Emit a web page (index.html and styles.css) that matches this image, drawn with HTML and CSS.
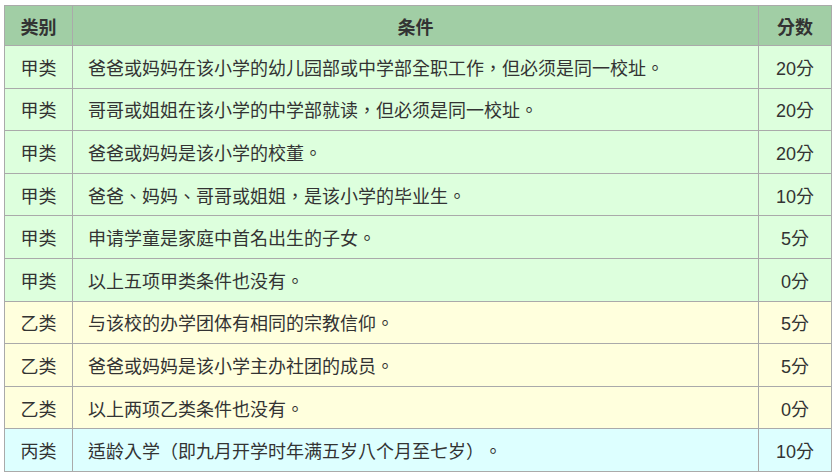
FILE: index.html
```html
<!DOCTYPE html>
<html lang="zh-Hant">
<head>
<meta charset="utf-8">
<link rel="stylesheet" href="styles.css">
</head>
<body>
<table class="score">
<colgroup><col class="c1"><col class="c2"><col class="c3"></colgroup>
<thead>
<tr><th>类别</th><th>条件</th><th>分数</th></tr>
</thead>
<tbody>
<tr class="jia"><td class="cat">甲类</td><td class="cond">爸爸或妈妈在该小学的幼儿园部或中学部全职工作，但必须是同一校址。</td><td class="pts">20分</td></tr>
<tr class="jia"><td class="cat">甲类</td><td class="cond">哥哥或姐姐在该小学的中学部就读，但必须是同一校址。</td><td class="pts">20分</td></tr>
<tr class="jia"><td class="cat">甲类</td><td class="cond">爸爸或妈妈是该小学的校董。</td><td class="pts">20分</td></tr>
<tr class="jia"><td class="cat">甲类</td><td class="cond">爸爸、妈妈、哥哥或姐姐，是该小学的毕业生。</td><td class="pts">10分</td></tr>
<tr class="jia"><td class="cat">甲类</td><td class="cond">申请学童是家庭中首名出生的子女。</td><td class="pts">5分</td></tr>
<tr class="jia"><td class="cat">甲类</td><td class="cond">以上五项甲类条件也没有。</td><td class="pts">0分</td></tr>
<tr class="yi"><td class="cat">乙类</td><td class="cond">与该校的办学团体有相同的宗教信仰。</td><td class="pts">5分</td></tr>
<tr class="yi"><td class="cat">乙类</td><td class="cond">爸爸或妈妈是该小学主办社团的成员。</td><td class="pts">5分</td></tr>
<tr class="yi"><td class="cat">乙类</td><td class="cond">以上两项乙类条件也没有。</td><td class="pts">0分</td></tr>
<tr class="bing"><td class="cat">丙类</td><td class="cond">适龄入学（即九月开学时年满五岁八个月至七岁）。</td><td class="pts">10分</td></tr>
</tbody>
</table>
</body>
</html>
```
FILE: styles.css
```css
html, body {
  margin: 0;
  background: #ffffff;
}
body {
  padding: 5px 0 0 4px;
  font-family: "Liberation Sans", "Noto Sans CJK TC", sans-serif;
  font-size: 18px;
  color: #333333;
  text-spacing-trim: space-all;
}
.score {
  border-collapse: collapse;
  width: 828px;
  table-layout: fixed;
}
.c1 { width: 68px; }
.c3 { width: 73px; }
.score th, .score td {
  border: 1px solid #aaaaaa;
  padding: 0;
}
.score th {
  background: #a1cea5;
  height: 39px;
  font-weight: bold;
  text-align: center;
}
.score td {
  height: 41.6px;
}
.cat, .pts { text-align: center; }
.cond { padding-left: 15px !important; text-align: left; }
.jia td { background: #ddffdd; }
.yi td { background: #ffffdd; }
.bing td { background: #ddffff; }
```
